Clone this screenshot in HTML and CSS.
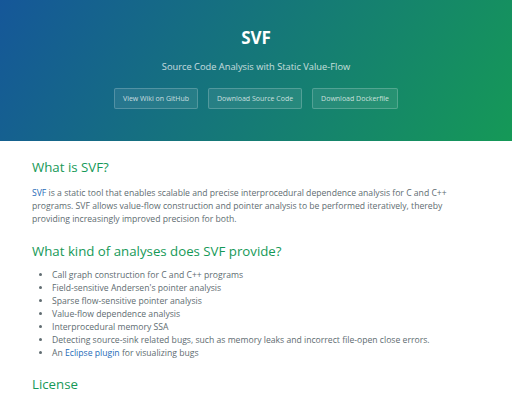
FILE: index.html
```html
<!DOCTYPE html>
<html lang="en">
<head>
<meta charset="utf-8">
<title>SVF</title>
<link rel="stylesheet" href="styles.css">
</head>
<body>
<header class="page-header">
  <h1 class="project-name">SVF</h1>
  <h2 class="project-tagline">Source Code Analysis with Static Value-Flow</h2>
  <div class="btn-row">
    <a class="btn">View Wiki on GitHub</a>
    <a class="btn">Download Source Code</a>
    <a class="btn">Download Dockerfile</a>
  </div>
</header>
<main class="main-content">
  <h1 class="section-title">What is SVF?</h1>
  <p class="text"><a class="link">SVF</a> is a static tool that enables scalable and precise interprocedural dependence analysis for C and C++ programs. SVF allows value-flow construction and pointer analysis to be performed iteratively, thereby providing increasingly improved precision for both.</p>
  <h1 class="section-title">What kind of analyses does SVF provide?</h1>
  <ul class="list">
    <li>Call graph construction for C and C++ programs</li>
    <li>Field-sensitive Andersen's pointer analysis</li>
    <li>Sparse flow-sensitive pointer analysis</li>
    <li>Value-flow dependence analysis</li>
    <li>Interprocedural memory SSA</li>
    <li>Detecting source-sink related bugs, such as memory leaks and incorrect file-open close errors.</li>
    <li>An <a class="link">Eclipse plugin</a> for visualizing bugs</li>
  </ul>
  <h1 class="section-title">License</h1>
</main>
</body>
</html>
```
FILE: styles.css
```css
html, body {
  margin: 0;
  padding: 0;
}
body {
  font-family: "Open Sans", "Liberation Sans", sans-serif;
  color: #606c71;
  background: #fff;
}
.page-header {
  height: 141px;
  box-sizing: border-box;
  padding-top: 26px;
  text-align: center;
  color: #fff;
  background-color: #159957;
  background-image: linear-gradient(120deg, #155799, #159957);
}
.project-name {
  margin: 0;
  font-size: 17px;
  font-weight: 700;
  line-height: 24px;
}
.project-tagline {
  margin: 10px 0 0;
  font-size: 9.3px;
  font-weight: 400;
  line-height: 14px;
  opacity: 0.75;
}
.btn-row {
  margin-top: 14px;
  display: flex;
  justify-content: center;
  gap: 10px;
}
.btn {
  display: inline-block;
  box-sizing: border-box;
  height: 21px;
  line-height: 19px;
  padding: 0 8px;
  font-size: 7px;
  color: rgba(255, 255, 255, 0.75);
  background-color: rgba(255, 255, 255, 0.08);
  border: 1px solid rgba(255, 255, 255, 0.2);
  border-radius: 2px;
}
.main-content {
  padding: 16px 32px 0;
  font-size: 8.63px;
  line-height: 13px;
}
.section-title {
  margin: 0;
  font-size: 13.25px;
  font-weight: 400;
  line-height: 20px;
  color: #159957;
}
.text {
  margin: 10px 0 15px;
}
.link {
  color: #1e6bb8;
  text-decoration: none;
}
.list {
  margin: 8px 0 14px;
  padding-left: 20px;
}
```
